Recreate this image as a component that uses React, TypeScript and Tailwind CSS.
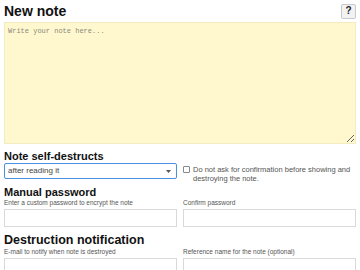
import React from "react";

export default function App() {
  return (
    <div className="w-[360px] h-[270px] overflow-hidden bg-white px-[4px] font-['Liberation_Sans',Arial,sans-serif] text-[#111]">
      <div className="flex items-center justify-between pt-[3px] h-[19px]">
        <h1 className="text-[14px] font-bold leading-none">New note</h1>
        <button className="w-[15px] h-[15px] flex items-center justify-center border border-[#c8c8c8] rounded-[2px] bg-[#f2f2f2] text-[10px] font-bold leading-none text-[#222]">
          ?
        </button>
      </div>
      <textarea
        className="mt-[3px] block w-full h-[122px] bg-[#fff8cf] border border-[#f3ecc0] px-[3px] py-[4px] font-['Liberation_Mono',monospace] text-[7px] leading-[9px] text-[#333] placeholder:text-[#8a8a7a] outline-none"
        placeholder="Write your note here..."
      />
      <h2 className="mt-[6px] text-[11px] font-bold leading-[12px]">Note self-destructs</h2>
      <div className="mt-[1px] grid grid-cols-2 gap-[6px] h-[16px]">
        <div className="relative h-[16px] border border-[#4a90e2] rounded-[2px] flex items-center px-[3px] text-[8px] text-[#444]">
          after reading it
          <svg className="absolute right-[5px] top-[6px]" width="5" height="3" viewBox="0 0 5 3">
            <path d="M0 0 L5 0 L2.5 3 Z" fill="#555" />
          </svg>
        </div>
        <div className="h-[16px] flex items-start gap-[3px] text-[7.5px] leading-[9px] text-[#555] pt-[2px]">
          <span className="mt-[1px] shrink-0 w-[7px] h-[7px] border border-[#888] rounded-[1px] bg-white" />
          <span>
            Do not ask for confirmation before showing and destroying the note.
          </span>
        </div>
      </div>
      <h2 className="mt-[7px] text-[11px] font-bold leading-[12px]">Manual password</h2>
      <div className="mt-[1px] grid grid-cols-2 gap-[6px]">
        <div>
          <div className="text-[6.5px] leading-[8px] text-[#555]">Enter a custom password to encrypt the note</div>
          <div className="mt-[2px] h-[18px] border border-[#d9d9d9]" />
        </div>
        <div>
          <div className="text-[6.5px] leading-[8px] text-[#555]">Confirm password</div>
          <div className="mt-[2px] h-[18px] border border-[#d9d9d9]" />
        </div>
      </div>
      <h2 className="mt-[7px] text-[12.5px] font-bold leading-[13px]">Destruction notification</h2>
      <div className="mt-[1px] grid grid-cols-2 gap-[6px]">
        <div>
          <div className="text-[6.5px] leading-[8px] text-[#555]">E-mail to notify when note is destroyed</div>
          <div className="mt-[2px] h-[18px] border border-[#d9d9d9]" />
        </div>
        <div>
          <div className="text-[6.5px] leading-[8px] text-[#555]">Reference name for the note (optional)</div>
          <div className="mt-[2px] h-[18px] border border-[#d9d9d9]" />
        </div>
      </div>
    </div>
  );
}
